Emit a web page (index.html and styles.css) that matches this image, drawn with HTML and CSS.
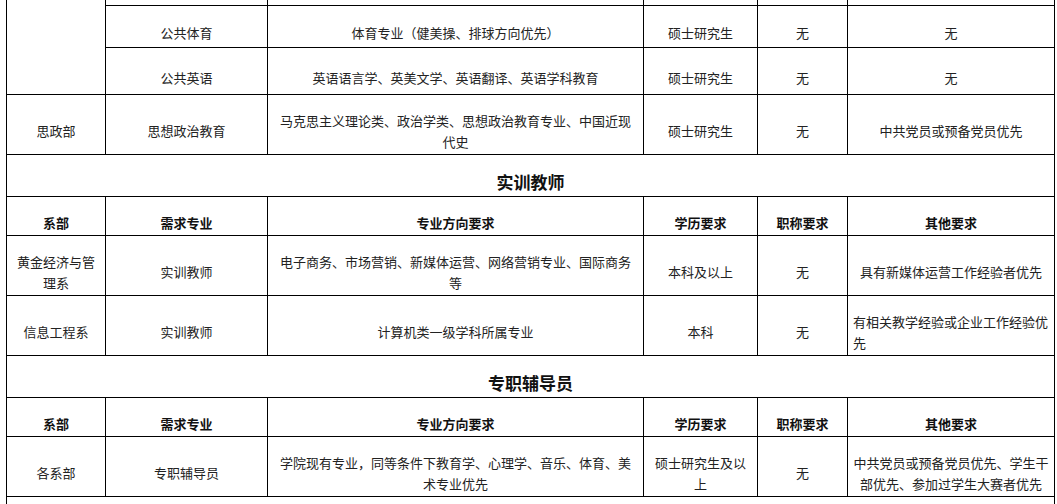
FILE: index.html
```html
<!DOCTYPE html>
<html lang="zh-CN">
<head>
<meta charset="utf-8">
<title>招聘岗位</title>
<link rel="stylesheet" href="styles.css">
</head>
<body>
<table class="jobs">
  <colgroup>
    <col class="c1"><col class="c2"><col class="c3"><col class="c4"><col class="c5"><col class="c6">
  </colgroup>
  <tbody>
    <tr class="r-top">
      <td rowspan="3" class="span-cell"></td>
      <td></td><td></td><td></td><td></td><td></td>
    </tr>
    <tr class="r42">
      <td>公共体育</td>
      <td class="wide">体育专业（健美操、排球方向优先）</td>
      <td>硕士研究生</td>
      <td>无</td>
      <td>无</td>
    </tr>
    <tr class="r47">
      <td>公共英语</td>
      <td class="wide">英语语言学、英美文学、英语翻译、英语学科教育</td>
      <td>硕士研究生</td>
      <td>无</td>
      <td>无</td>
    </tr>
    <tr class="r60">
      <td>思政部</td>
      <td>思想政治教育</td>
      <td class="wide">马克思主义理论类、政治学类、思想政治教育专业、中国近现代史</td>
      <td>硕士研究生</td>
      <td>无</td>
      <td>中共党员或预备党员优先</td>
    </tr>
    <tr class="r42 title">
      <td colspan="6">实训教师</td>
    </tr>
    <tr class="r39 head">
      <td>系部</td><td>需求专业</td><td>专业方向要求</td><td>学历要求</td><td>职称要求</td><td>其他要求</td>
    </tr>
    <tr class="r60">
      <td>黄金经济与管理系</td>
      <td>实训教师</td>
      <td class="wide">电子商务、市场营销、新媒体运营、网络营销专业、国际商务等</td>
      <td>本科及以上</td>
      <td>无</td>
      <td>具有新媒体运营工作经验者优先</td>
    </tr>
    <tr class="r60">
      <td>信息工程系</td>
      <td>实训教师</td>
      <td class="wide">计算机类一级学科所属专业</td>
      <td>本科</td>
      <td>无</td>
      <td class="left">有相关教学经验或企业工作经验优先</td>
    </tr>
    <tr class="r42 title">
      <td colspan="6">专职辅导员</td>
    </tr>
    <tr class="r39 head">
      <td>系部</td><td>需求专业</td><td>专业方向要求</td><td>学历要求</td><td>职称要求</td><td>其他要求</td>
    </tr>
    <tr class="r60">
      <td>各系部</td>
      <td>专职辅导员</td>
      <td class="wide">学院现有专业，同等条件下教育学、心理学、音乐、体育、美术专业优先</td>
      <td>硕士研究生及以上</td>
      <td>无</td>
      <td>中共党员或预备党员优先、学生干部优先、参加过学生大赛者优先</td>
    </tr>
    <tr class="r42 title">
      <td colspan="6"></td>
    </tr>
  </tbody>
</table>
</body>
</html>
```

FILE: styles.css
```css
html, body {
  margin: 0;
  padding: 0;
  background: #ffffff;
}

body {
  font-family: "Noto Sans CJK SC", "Noto Sans", sans-serif;
  font-size: 13px;
  color: #222222;
}

.jobs {
  margin-left: 6px;
  border-collapse: collapse;
  table-layout: fixed;
  width: 1048px;
  border-top: none;
}

.c1 { width: 99px; }
.c2 { width: 162px; }
.c3 { width: 376px; }
.c4 { width: 114px; }
.c5 { width: 90px; }
.c6 { width: 207px; }

.jobs td {
  border: 1px solid #000;
  box-sizing: border-box;
  padding: 13px 5px 0 5px;
  line-height: 21px;
  text-align: center;
  vertical-align: middle;
  word-break: break-all;
}

.jobs td.wide {
  padding-left: 6px;
  padding-right: 6px;
}

.jobs td.left {
  text-align: left;
}

.r-top td {
  border-top: none;
  height: 5px;
  padding: 0;
  line-height: 0;
}

.jobs td.span-cell {
  padding: 0;
}

.r42 td { height: 42px; }
.r47 td { height: 47px; }
.r60 td { height: 60px; }
.r39 td { height: 39px; }

.head td {
  font-weight: bold;
  color: #111;
}

.title td {
  font-size: 17px;
  font-weight: bold;
  color: #111;
}
```
